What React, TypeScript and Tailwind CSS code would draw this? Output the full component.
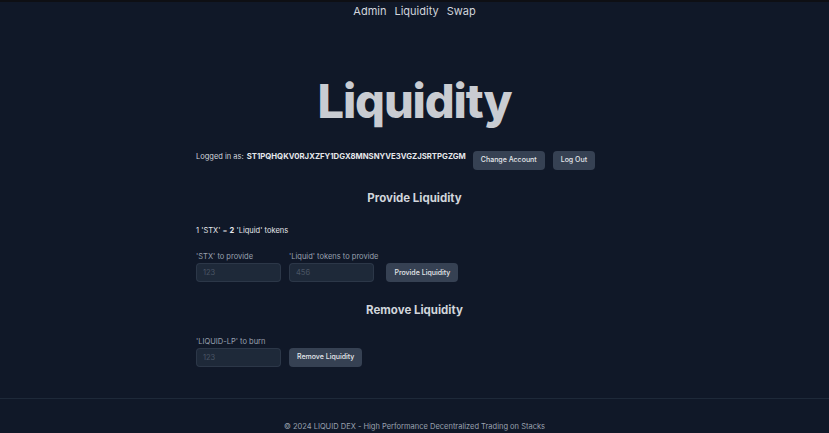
import React from 'react'

const font = { fontFamily: 'Inter, "Noto Sans", sans-serif' }

function Field({ label, placeholder }: { label: string; placeholder: string }) {
  return (
    <div className="flex flex-col gap-[1px]">
      <label className="text-[7.5px] leading-[10px] text-gray-400">{label}</label>
      <input
        placeholder={placeholder}
        className="h-[19px] w-[85px] rounded-[4px] border border-gray-700/60 bg-gray-800 px-[6px] text-[7.5px] text-gray-300 outline-none placeholder:text-gray-600"
      />
    </div>
  )
}

function SmallButton({ children }: { children: React.ReactNode }) {
  return (
    <button className="h-[19px] rounded-[4px] bg-gray-700 px-[8px] text-[7px] font-medium text-gray-200">
      {children}
    </button>
  )
}

export default function App() {
  return (
    <div className="flex h-[433px] w-full flex-col overflow-hidden bg-gray-900" style={font}>
      <div className="h-[2px] w-full bg-[#0e0f14]" />
      <nav className="flex justify-center gap-[8px] pt-[1px] text-[11px] leading-[16px] text-gray-300">
        <a>Admin</a>
        <a>Liquidity</a>
        <a>Swap</a>
      </nav>

      <main className="mx-auto flex w-[437px] flex-col">
        <h1 className="mt-[54px] text-center text-[47px] font-extrabold leading-[56px] tracking-tight text-[#c9ccd2]">
          Liquidity
        </h1>

        <div className="mt-[15px] flex items-center">
          <span className="text-[7.5px] text-gray-300">Logged in as: </span>
          <span className="ml-[3px] text-[7.75px] font-bold text-gray-200">
            ST1PQHQKV0RJXZFY1DGX8MNSNYVE3VGZJSRTPGZGM
          </span>
          <div className="ml-[7px]">
            <SmallButton>Change Account</SmallButton>
          </div>
          <div className="ml-[8px]">
            <SmallButton>Log Out</SmallButton>
          </div>
        </div>

        <h2 className="mt-[20px] text-center text-[11.5px] font-bold text-gray-300">Provide Liquidity</h2>

        <p className="mt-[18px] text-[7.5px] text-gray-200">
          1 'STX' = <span className="font-bold">2</span> 'Liquid' tokens
        </p>

        <div className="mt-[16px] flex items-end gap-[8px]">
          <Field label="'STX' to provide" placeholder="123" />
          <Field label="'Liquid' tokens to provide" placeholder="456" />
          <SmallButton>Provide Liquidity</SmallButton>
        </div>

        <h2 className="mt-[20px] text-center text-[11.5px] font-bold text-gray-300">Remove Liquidity</h2>

        <div className="mt-[17px] flex items-end gap-[8px]">
          <Field label="'LIQUID-LP' to burn" placeholder="123" />
          <SmallButton>Remove Liquidity</SmallButton>
        </div>
      </main>

      <footer className="mt-auto border-t border-gray-800 pt-[22px] text-center">
        <p className="text-[7.5px] leading-[12px] text-gray-400">
          © 2024 LIQUID DEX - High Performance Decentralized Trading on Stacks
        </p>
      </footer>
    </div>
  )
}
